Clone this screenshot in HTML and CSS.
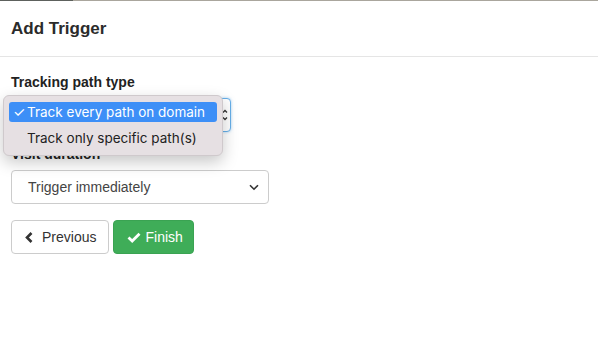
FILE: index.html
```html
<!DOCTYPE html>
<html lang="en">
  <head>
    <meta charset="UTF-8" />
    <title>Add Trigger</title>
    <link rel="stylesheet" href="styles.css">
  </head>
  <body>
    <div class="topline"><span class="topline-dark"></span></div>
    <div class="modal-header">
      <h4 class="modal-title">Add Trigger</h4>
    </div>
    <div class="modal-body">
      <div class="form-group">
        <label class="control-label">Tracking path type</label>
        <div class="select-wrap">
          <!-- select box sits under the open popup, only its edge shows -->
          <div class="fake-select focused">
            <svg class="arrows" width="6" height="12" viewBox="0 0 6 12">
              <path d="M1 3.5 L3 1.5 L5 3.5 M1 8.5 L3 10.5 L5 8.5" fill="none" stroke="#333" stroke-width="1.3" />
            </svg>
          </div>
          <ul class="popup">
            <li class="option selected"><span class="tick">✓</span>Track every path on domain</li>
            <li class="option">Track only specific path(s)</li>
          </ul>
        </div>
      </div>

      <div class="form-group">
        <label class="control-label">Visit duration</label>
        <div class="fake-select wide">
          <span>Trigger immediately</span>
          <svg class="chevron" width="10" height="7" viewBox="0 0 10 7">
            <path d="M1 1.2 L5 5.2 L9 1.2" fill="none" stroke="#333" stroke-width="1.6" />
          </svg>
        </div>
      </div>

      <div class="buttons">
        <button class="btn btn-default">
          <svg width="8" height="11" viewBox="0 0 8 11">
            <path d="M6.5 1 L2 5.5 L6.5 10" fill="none" stroke="#333" stroke-width="2.6" />
          </svg>
          Previous
        </button>
        <button class="btn btn-success">
          <svg width="14" height="11" viewBox="0 0 14 11">
            <path d="M1.5 5.5 L5.2 9 L12.5 1.8" fill="none" stroke="#fff" stroke-width="2.8" />
          </svg>
          Finish
        </button>
      </div>
    </div>
  </body>
</html>
```

FILE: styles.css
```css
* {
  box-sizing: border-box;
}

body {
  margin: 0;
  font-family: "Liberation Sans", Arial, sans-serif;
  font-size: 14px;
  color: #333;
  background: #fff;
}

.topline {
  height: 1px;
  background: #aaa69d;
}

.topline-dark {
  display: block;
  width: 73px;
  height: 1px;
  background: #5d615d;
}

.modal-header {
  height: 56px;
  padding: 0 11px;
  border-bottom: 1px solid #e5e5e5;
  display: flex;
  align-items: center;
}

.modal-title {
  margin: 0;
  font-size: 17px;
  font-weight: bold;
  color: #2b2b2b;
  padding-top: 1px;
}

.modal-body {
  padding: 16px 11px;
}

.form-group {
  margin-bottom: 12px;
}

.control-label {
  display: block;
  font-size: 14px;
  font-weight: bold;
  color: #222;
  margin-bottom: 7px;
  line-height: 18px;
}

.form-group + .form-group .control-label {
  padding-top: 1px;
}

.select-wrap {
  position: relative;
  width: 220px;
}

.fake-select {
  height: 34px;
  border: 1px solid #ccc;
  border-radius: 4px;
  display: flex;
  align-items: center;
  justify-content: space-between;
  padding: 0 9px 0 16px;
  font-size: 14px;
  color: #444;
  background: #fff;
}

.fake-select.focused {
  border-color: #66afe9;
  box-shadow: 0 0 3px rgba(102, 175, 233, 0.6);
  justify-content: flex-end;
  padding-right: 2px;
}

.fake-select.wide {
  width: 258px;
}

.popup {
  position: absolute;
  top: -3px;
  left: -8px;
  width: 220px;
  margin: 0;
  padding: 6px 5px 7px;
  list-style: none;
  background: #e6e0e3;
  border: 1px solid #cfc9cc;
  border-radius: 6px;
  box-shadow: 0 6px 16px rgba(0, 0, 0, 0.22);
  font-family: Inter, "Liberation Sans", sans-serif;
  font-size: 13.5px;
  color: #222;
}

.option {
  height: 20px;
  line-height: 20px;
  padding-left: 18px;
  border-radius: 3px;
  margin-bottom: 6px;
  white-space: nowrap;
}

.option:last-child {
  margin-bottom: 0;
}

.option.selected {
  background: #3d8ff7;
  color: #fff;
  padding-left: 4px;
}

.tick {
  display: inline-block;
  width: 14px;
  font-size: 14px;
}

.buttons {
  display: flex;
  gap: 4px;
  margin-top: 16px;
}

.btn {
  height: 34px;
  border: 1px solid #ccc;
  border-radius: 4px;
  padding: 0 12px 0 13px;
  font-family: "Liberation Sans", Arial, sans-serif;
  font-size: 14px;
  display: flex;
  align-items: center;
  gap: 9px;
  background: #fff;
  color: #333;
}

.btn-success {
  background: #3fad58;
  border-color: #3aa352;
  color: #fff;
  gap: 4px;
  padding-right: 10px;
}
```
